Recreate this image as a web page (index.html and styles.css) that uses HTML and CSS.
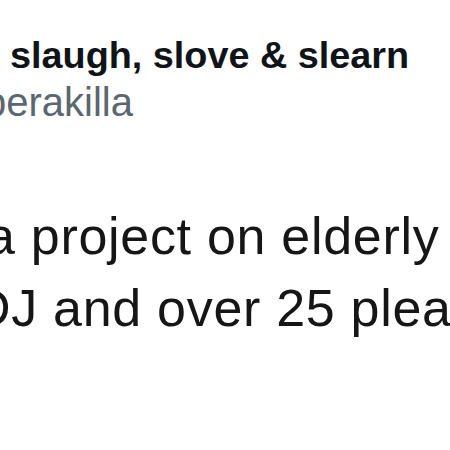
FILE: index.html
```html
<!DOCTYPE html>
<html>
<head>
<meta charset="utf-8">
<link rel="stylesheet" href="styles.css">
</head>
<body>
<div class="tweet">
  <div class="header">
    <div class="name">slaugh, slove &amp; slearn</div>
    <div class="handle">berakilla</div>
  </div>
  <div class="text">
    <div class="line line1">a project on elderly</div>
    <div class="line line2">DJ and over 25 plea</div>
  </div>
</div>
</body>
</html>
```

FILE: styles.css
```css
html, body {
  margin: 0;
  padding: 0;
  background: #ffffff;
  width: 450px;
  height: 450px;
  overflow: hidden;
}
.tweet {
  font-family: "Liberation Sans", Arial, sans-serif;
  white-space: nowrap;
}
.header {
  padding-top: 33px;
}
.name {
  font-size: 37.8px;
  line-height: 44px;
  font-weight: bold;
  color: #0f1419;
  padding-left: 10px;
}
.handle {
  margin-top: 3px;
  font-size: 40px;
  line-height: 44px;
  color: #5b6670;
  margin-left: -16px;
}
.text {
  margin-top: 76px;
  font-size: 52px;
  line-height: 72px;
  color: #161616;
  letter-spacing: 0.7px;
}
.line1 {
  margin-left: -14px;
}
.line2 {
  margin-left: -27px;
}
```
